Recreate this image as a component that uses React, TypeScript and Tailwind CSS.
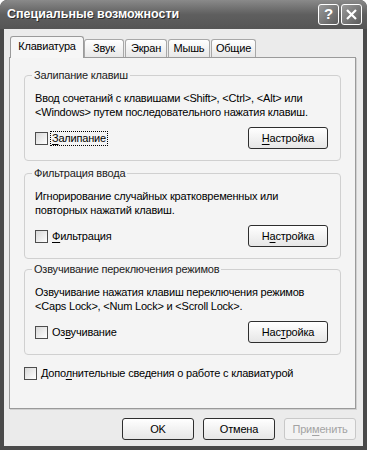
import {ReactNode} from "react";

const font = {fontFamily: '"Liberation Sans", Arial, sans-serif'};

function U(props: {children: ReactNode}) {
  return <span className="underline underline-offset-[2px]">{props.children}</span>;
}

function CheckBox(props: {children: ReactNode, focus?: boolean}) {
  return (
    <label className="flex items-center gap-[2px]">
      <span className="w-[13px] h-[13px] border border-[#4d4d4d] bg-gradient-to-br from-[#d8d8d8] to-white" />
      <span className={props.focus ? "px-[1px] border border-dotted border-black leading-[13px]" : "px-[1px] border border-transparent leading-[13px]"}>
        {props.children}
      </span>
    </label>
  );
}

function Button(props: {children: ReactNode, disabled?: boolean, width?: string}) {
  const cls = props.disabled
    ? "border-[#c8c8c8] text-[#a3a3a3] bg-[#f3f3f3]"
    : "border-[#2e2e2e] text-black bg-gradient-to-b from-white to-[#e6e6e6]";
  return (
    <button className={"h-[22px] rounded-[3px] border text-[11px] flex items-center justify-center " + cls + " " + (props.width || "w-[80px]")}>
      {props.children}
    </button>
  );
}

function Group(props: {title: string, lines: string[], check: ReactNode, btn: ReactNode, focus?: boolean}) {
  return (
    <fieldset className="mx-[14px] border border-[#d0d0d0] rounded-[4px] px-[10px] pb-[11px]">
      <legend className="-ml-[3px] px-[2px] leading-[13px] text-[#222]">{props.title}</legend>
      <div className="mt-[9px] leading-[14px]">
        {props.lines.map((l) => <div key={l}>{l}</div>)}
      </div>
      <div className="mt-[8px] flex items-center justify-between pr-[2px]">
        <CheckBox focus={props.focus}>{props.check}</CheckBox>
        <Button>{props.btn}</Button>
      </div>
    </fieldset>
  );
}

export default function App() {
  const tabs = ["Звук", "Экран", "Мышь", "Общие"];
  const tabW = ["w-[40px]", "w-[42px]", "w-[42px]", "w-[45px]"];
  return (
    <div className="w-[367px] h-[450px] bg-[#4a4a4a] rounded-t-[7px] flex flex-col overflow-hidden text-[11px] tracking-[-0.2px] text-black" style={font}>
      {/* title bar */}
      <div className="h-[29px] flex items-center justify-between pl-[7px] pr-[5px] bg-gradient-to-b from-[#8a8a8a] via-[#5f5f5f] to-[#555555] rounded-t-[7px]">
        <span className="text-white font-bold text-[12.5px] tracking-[0px] [text-shadow:1px_1px_0_#2a2a2a]">Специальные возможности</span>
        <div className="flex gap-[2px]">
          <div className="w-[21px] h-[21px] rounded-[3px] border border-white bg-gradient-to-br from-[#9a9a9a] to-[#5c5c5c] flex items-center justify-center text-white font-bold text-[15px]">?</div>
          <div className="w-[21px] h-[21px] rounded-[3px] border border-white bg-gradient-to-br from-[#9a9a9a] to-[#5c5c5c] flex items-center justify-center">
            <svg width="13" height="13" viewBox="0 0 13 13"><path d="M2 2L11 11M11 2L2 11" stroke="white" strokeWidth="2.2" /></svg>
          </div>
        </div>
      </div>
      {/* client */}
      <div className="flex-1 mx-[4px] mb-[4px] bg-[#ebebeb] flex flex-col pl-[5px] pr-[7px]">
        <div className="h-[28px] flex items-end pl-[1px]">
          <div className="relative z-10 -mb-[1px] w-[74px] h-[22px] border border-b-0 border-[#9a9a9a] rounded-t-[3px] bg-[#f6f6f6] flex items-center justify-center pb-[2px]">Клавиатура</div>
          {tabs.map((t, i) => (
            <div key={t} className={"h-[18px] border border-b-0 border-[#a8a8a8] rounded-t-[3px] bg-gradient-to-b from-white to-[#e8e8e8] flex items-center justify-center mr-[1px] " + tabW[i]}>{t}</div>
          ))}
        </div>
        <div className="h-[352px] border border-[#9a9a9a] bg-[#f4f4f4] shadow-[1px_1px_0_#d0d0d0] flex flex-col pt-[11px]">
          <Group
            title="Залипание клавиш"
            lines={["Ввод сочетаний с клавишами <Shift>, <Ctrl>, <Alt> или", "<Windows> путем последовательного нажатия клавиш."]}
            check={<><U>З</U>алипание</>}
            btn={<><U>Н</U>астройка</>}
            focus
          />
          <div className="h-[6px]" />
          <Group
            title="Фильтрация ввода"
            lines={["Игнорирование случайных кратковременных или", "повторных нажатий клавиш."]}
            check={<><U>Ф</U>ильтрация</>}
            btn={<>Н<U>а</U>стройка</>}
          />
          <div className="h-[4px]" />
          <Group
            title="Озвучивание переключения режимов"
            lines={["Озвучивание нажатия клавиш переключения режимов", "<Caps Lock>, <Num Lock> и <Scroll Lock>."]}
            check={<>Оз<U>в</U>учивание</>}
            btn={<>Нас<U>т</U>ройка</>}
          />
          <div className="mt-[11px] ml-[14px]">
            <CheckBox>Допо<U>л</U>нительные сведения о работе с клавиатурой</CheckBox>
          </div>
        </div>
        <div className="flex justify-end gap-[9px] mt-[9px]">
          <Button width="w-[72px]">OK</Button>
          <Button width="w-[72px]">Отмена</Button>
          <Button width="w-[72px]" disabled>При<U>м</U>енить</Button>
        </div>
      </div>
    </div>
  );
}
